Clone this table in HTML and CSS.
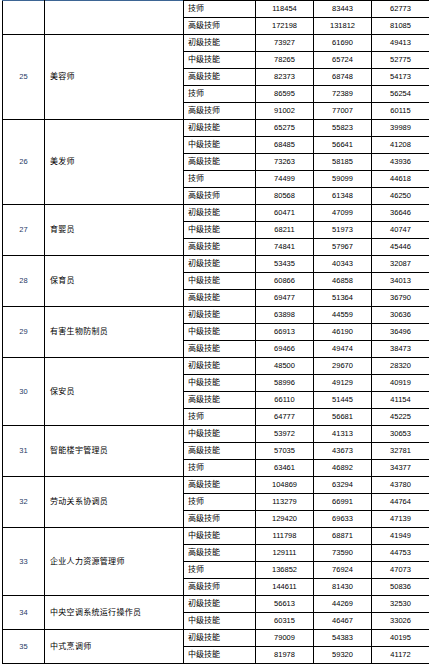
FILE: index.html
```html
<!DOCTYPE html>
<html lang="zh">
<head>
<meta charset="utf-8">
<link rel="stylesheet" href="styles.css">
</head>
<body>
<table class="grid">
<colgroup><col class="c-no"><col class="c-name"><col class="c-lvl"><col class="c-v"><col class="c-v"><col class="c-v"></colgroup>
<tbody>
<tr><td class="no top" rowspan="2"></td><td class="name top" rowspan="2"></td><td class="lvl">技师</td><td class="v">118454</td><td class="v">83443</td><td class="v">62773</td></tr>
<tr><td class="lvl">高级技师</td><td class="v">172198</td><td class="v">131812</td><td class="v">81085</td></tr>

<tr><td class="no" rowspan="5">25</td><td class="name" rowspan="5">美容师</td><td class="lvl">初级技能</td><td class="v">73927</td><td class="v">61690</td><td class="v">49413</td></tr>
<tr><td class="lvl">中级技能</td><td class="v">78265</td><td class="v">65724</td><td class="v">52775</td></tr>
<tr><td class="lvl">高级技能</td><td class="v">82373</td><td class="v">68748</td><td class="v">54173</td></tr>
<tr><td class="lvl">技师</td><td class="v">86595</td><td class="v">72389</td><td class="v">56254</td></tr>
<tr><td class="lvl">高级技师</td><td class="v">91002</td><td class="v">77007</td><td class="v">60115</td></tr>

<tr><td class="no" rowspan="5">26</td><td class="name" rowspan="5">美发师</td><td class="lvl">初级技能</td><td class="v">65275</td><td class="v">55823</td><td class="v">39989</td></tr>
<tr><td class="lvl">中级技能</td><td class="v">68485</td><td class="v">56641</td><td class="v">41208</td></tr>
<tr><td class="lvl">高级技能</td><td class="v">73263</td><td class="v">58185</td><td class="v">43936</td></tr>
<tr><td class="lvl">技师</td><td class="v">74499</td><td class="v">59099</td><td class="v">44618</td></tr>
<tr><td class="lvl">高级技师</td><td class="v">80568</td><td class="v">61348</td><td class="v">46250</td></tr>

<tr><td class="no" rowspan="3">27</td><td class="name" rowspan="3">育婴员</td><td class="lvl">初级技能</td><td class="v">60471</td><td class="v">47099</td><td class="v">36646</td></tr>
<tr><td class="lvl">中级技能</td><td class="v">68211</td><td class="v">51973</td><td class="v">40747</td></tr>
<tr><td class="lvl">高级技能</td><td class="v">74841</td><td class="v">57967</td><td class="v">45446</td></tr>

<tr><td class="no" rowspan="3">28</td><td class="name" rowspan="3">保育员</td><td class="lvl">初级技能</td><td class="v">53435</td><td class="v">40343</td><td class="v">32087</td></tr>
<tr><td class="lvl">中级技能</td><td class="v">60866</td><td class="v">46858</td><td class="v">34013</td></tr>
<tr><td class="lvl">高级技能</td><td class="v">69477</td><td class="v">51364</td><td class="v">36790</td></tr>

<tr><td class="no" rowspan="3">29</td><td class="name" rowspan="3">有害生物防制员</td><td class="lvl">初级技能</td><td class="v">63898</td><td class="v">44559</td><td class="v">30636</td></tr>
<tr><td class="lvl">中级技能</td><td class="v">66913</td><td class="v">46190</td><td class="v">36496</td></tr>
<tr><td class="lvl">高级技能</td><td class="v">69466</td><td class="v">49474</td><td class="v">38473</td></tr>

<tr><td class="no" rowspan="4">30</td><td class="name" rowspan="4">保安员</td><td class="lvl">初级技能</td><td class="v">48500</td><td class="v">29670</td><td class="v">28320</td></tr>
<tr><td class="lvl">中级技能</td><td class="v">58996</td><td class="v">49129</td><td class="v">40919</td></tr>
<tr><td class="lvl">高级技能</td><td class="v">66110</td><td class="v">51445</td><td class="v">41154</td></tr>
<tr><td class="lvl">技师</td><td class="v">64777</td><td class="v">56681</td><td class="v">45225</td></tr>

<tr><td class="no" rowspan="3">31</td><td class="name" rowspan="3">智能楼宇管理员</td><td class="lvl">中级技能</td><td class="v">53972</td><td class="v">41313</td><td class="v">30653</td></tr>
<tr><td class="lvl">高级技能</td><td class="v">57035</td><td class="v">43673</td><td class="v">32781</td></tr>
<tr><td class="lvl">技师</td><td class="v">63461</td><td class="v">46892</td><td class="v">34377</td></tr>

<tr><td class="no" rowspan="3">32</td><td class="name" rowspan="3">劳动关系协调员</td><td class="lvl">高级技能</td><td class="v">104869</td><td class="v">63294</td><td class="v">43780</td></tr>
<tr><td class="lvl">技师</td><td class="v">113279</td><td class="v">66991</td><td class="v">44764</td></tr>
<tr><td class="lvl">高级技师</td><td class="v">129420</td><td class="v">69633</td><td class="v">47139</td></tr>

<tr><td class="no" rowspan="4">33</td><td class="name" rowspan="4">企业人力资源管理师</td><td class="lvl">中级技能</td><td class="v">111798</td><td class="v">68871</td><td class="v">41949</td></tr>
<tr><td class="lvl">高级技能</td><td class="v">129111</td><td class="v">73590</td><td class="v">44753</td></tr>
<tr><td class="lvl">技师</td><td class="v">136852</td><td class="v">76924</td><td class="v">47073</td></tr>
<tr><td class="lvl">高级技师</td><td class="v">144611</td><td class="v">81430</td><td class="v">50836</td></tr>

<tr><td class="no" rowspan="2">34</td><td class="name" rowspan="2">中央空调系统运行操作员</td><td class="lvl">初级技能</td><td class="v">56613</td><td class="v">44269</td><td class="v">32530</td></tr>
<tr><td class="lvl">中级技能</td><td class="v">60315</td><td class="v">46467</td><td class="v">33026</td></tr>

<tr><td class="no" rowspan="2">35</td><td class="name" rowspan="2">中式烹调师</td><td class="lvl">初级技能</td><td class="v">79009</td><td class="v">54383</td><td class="v">40195</td></tr>
<tr><td class="lvl">中级技能</td><td class="v">81978</td><td class="v">59320</td><td class="v">41172</td></tr>
</tbody>
</table>
</body>
</html>
```

FILE: styles.css
```css
html, body {
  margin: 0;
  padding: 0;
  background: #ffffff;
}
body {
  padding-left: 2px;
  font-family: "Liberation Sans", "Noto Sans CJK SC", sans-serif;
  color: #000;
}
.grid {
  border-collapse: collapse;
  table-layout: fixed;
  width: 427px;
}
.c-no { width: 42px; }
.c-name { width: 139px; }
.c-lvl { width: 72px; }
.c-v { width: 58px; }
.grid tr { height: 17px; }
.grid td {
  border: 1px solid #000;
  padding: 0;
  height: 16px;
  line-height: 10px;
  vertical-align: middle;
  overflow: hidden;
  white-space: nowrap;
}
.grid td.top {
  border-top-color: #3d6594;
}
.no {
  text-align: center;
  font-size: 7.5px;
  color: #1f3a66;
}
.name {
  padding-left: 5px !important;
  font-size: 8px;
  letter-spacing: 0.3px;
}
.lvl {
  padding-left: 4px !important;
  font-size: 8px;
}
.v {
  text-align: center;
  font-size: 7.5px;
}
```
